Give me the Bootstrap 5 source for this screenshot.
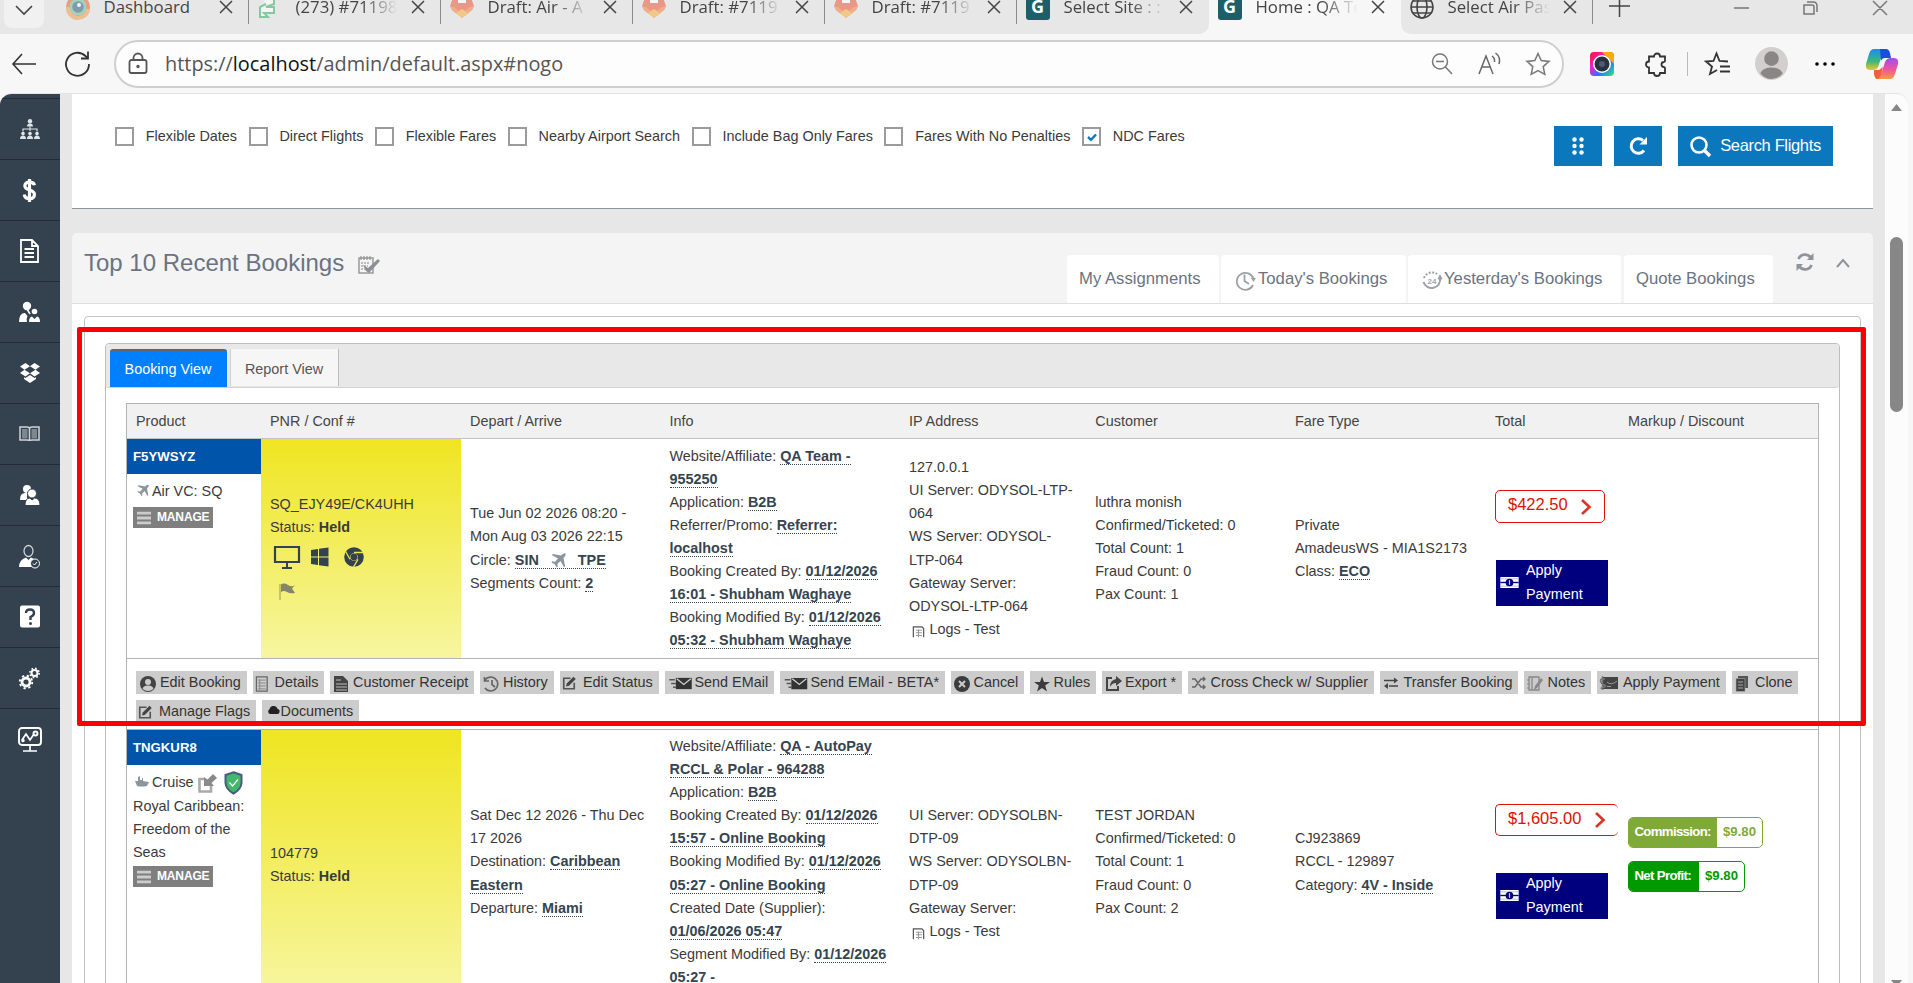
<!DOCTYPE html>
<html lang="en">
<head>
<meta charset="utf-8">
<title>Home : QA Team</title>
<link href="https://cdn.jsdelivr.net/npm/bootstrap@5.3.0/dist/css/bootstrap.min.css" rel="stylesheet">
<style>
html,body{height:983px;overflow:hidden}
body{font-family:"Liberation Sans",Arial,sans-serif;font-size:14.4px;line-height:23.06px;color:#3a3a3a;background:#f7f7f7}
svg{display:block;flex:none;overflow:visible}
.ln{fill:none}
.ln:not([stroke]){stroke:currentColor}
/* browser frame */
.tabstrip{height:34px;background:#e7e7e7;padding-left:4px;overflow:hidden;font-family:"Open Sans",sans-serif;font-size:16.8px;color:#444}
.tabmenu{width:40px;height:28px;background:#f1f1f1;border-radius:0 0 8px 8px;padding-bottom:8px;margin-right:12.5px}
.btab{width:192px;height:34px;padding:0 0 20px 9px;position:relative}
.btab .fav{width:25px;opacity:.55}
.btab .ttl{width:106px;margin:0 9px 0 13px;white-space:nowrap;overflow:hidden;-webkit-mask-image:linear-gradient(90deg,#000 62%,transparent 96%);mask-image:linear-gradient(90deg,#000 62%,transparent 96%)}
.btab .ttl.full{-webkit-mask-image:none;mask-image:none}
.btab.sep::after{content:"";position:absolute;right:0;top:0;width:1px;height:24px;background:#8a8a8a}
.btab.current{background:#f7f7f7}
.btab.current .fav,.btab .fav.solid{opacity:1}
.btab.beforecur{border-radius:0 0 10px 0;background:#e7e7e7}
.curwrap{background:#f7f7f7}
.btab.aftercur{border-radius:0 0 0 10px;background:#e7e7e7}
.gfav{width:24px;height:26px;background:#1c5f68;border-radius:3px;color:#fff;font-weight:700;font-size:18px;line-height:24px;text-align:center}
.toolbar{height:59px;color:#333}
.pill{height:48px;border:2px solid #cfcfcf;border-radius:24px;background:#fdfdfd;margin:0 9px 0 8px;color:#555}
.url{font-family:"Open Sans",sans-serif;font-size:19.9px;line-height:30px;color:#555;padding-left:5px}
.url b{font-weight:400;color:#111}
.w48{width:48px}.w52{width:52px}.w58{width:58px}
/* page */
.page{height:890px;border-top:1px solid #e3e3e3;overflow:hidden;margin-right:5px;border-top-right-radius:12px;background:#e7e7e7;border-top-left-radius:12px}
.side{width:60px;background:#34414e;color:#fff;padding-top:4px}
.side a{height:61px;border-top:1px solid #222c36;color:#fff;padding-right:1px}
.content{width:1825px;padding:0 12px;position:relative}
.scroller{width:23px;background:#fcfcfc;padding-top:10px;height:889px}
.thumb{width:13px;height:175px;border-radius:7px;background:#878787;margin:126px auto 0 5px}
.search-panel{height:115px;border-bottom:1px solid #8a979b;background:#fff;padding:33px 40px 0 43px}
.cb{width:19px;height:19px;border:2px solid #9b9b9b;background:#fff}
.opt{line-height:19px;margin-right:11.6px}
.opt .t{margin-left:11.8px}
.sbtn{height:40px;width:48px;background:#0b77bd;color:#fff;border:0;border-radius:0;padding:0;font-size:16.5px}
.sbtn.wide{width:155px;letter-spacing:-.35px}
.recent-head{height:71px;background:#f4f4f4;border-bottom:1px solid #dfdfdf;border-radius:5px 5px 0 0;margin-top:24px;padding-left:12px;color:#6b7380}
.recent-head h2{font-size:24px;font-weight:400;line-height:30px;margin:15px 14px 0 0}
.hm{height:48px;background:#fff;border-radius:4px 4px 0 0;font-size:16.7px;color:#6b7380;line-height:48px;white-space:nowrap}
.recent-body{background:#fff;padding:12px 12px 0;height:690px}
.outerbox{border:1px solid #c5c5c5;border-radius:4px;padding:26px 20px 0;height:700px}
.viewbox{border:1px solid #bdbdbd;border-radius:4px;height:700px}
.viewtabs{height:44px;background:#e8e8e8;border-bottom:1px solid #d3d3d3;border-radius:3px;padding:5px 0 0 4px}
.viewtabs a{text-decoration:none;font-size:14.4px;padding-right:1px}
.vt1{width:117px;height:38px;background:#007fff;color:#fff;border-top:2px solid #5b6670;border-radius:3px 3px 0 0;margin-right:3px;line-height:36px}
.vt2{width:109px;height:37px;background:#f6f6f6;color:#555;border-left:1px solid #cfcfcf;border-right:1px solid #bdbdbd;line-height:40px}
.grid{width:1693px;margin:15px 0 0 20px;border:1px solid #b3b3b3;height:700px}
.gr{display:grid;grid-template-columns:133.5px 200px 199.5px 239.5px 186.3px 199.7px 200px 133px 199.5px}
.gr>div{padding:5px 9.5px 5px;min-width:0}
.ghead{background:#f1f1f1;height:35px;border-bottom:1px solid #c3c3c3;color:#444}
.gr.ghead>div{padding-top:6px}
.gr.ghead>div:first-child{padding-left:9px}
.gr.grow1{height:220px;border-bottom:1px solid #b3b3b3}
.gr.grow2{height:264px}
.gr>.mid{display:flex;flex-direction:column;justify-content:center}
.gr>.prod{padding:0}
.prod .code{height:35px;background:#0055aa;color:#fff;font-weight:700;font-size:13.2px;line-height:35px;padding-left:6px}
.prod .in{padding:6px 0 0 6px}
.yel{background:linear-gradient(#efe521,#f7f6a0)}
.mng{width:80px;height:21px;background:#7f7f7f;color:#fff;font-weight:700;font-size:12px;line-height:21px;padding-left:4px}
.mng span{margin-left:6px;letter-spacing:-.15px}
.d{font-weight:700;color:#36444f;border-bottom:1px dotted #36444f;display:inline;text-decoration:none}
.inl{display:inline-block;vertical-align:middle}
.price{width:110px;height:33px;border:1px solid #dd1100;border-radius:5px;color:#dd1100;font-size:16.5px;line-height:31px;padding:0 12px;background:#fff}
.pay{width:112px;height:46px;background:#00007f;color:#fff;padding-left:4px}
.pay span{width:70px;margin-left:7px}
.money{height:31px;border:1px solid;border-radius:5px;font-weight:700;font-size:13.2px;overflow:hidden;background:#fff;line-height:27px}
.money>span{padding:0 5px 0 5.5px;letter-spacing:-.65px;color:#fff;display:block;height:31px}
.money>b{padding-left:6px}
.cm{width:135px;border-color:#80aa37!important;color:#80aa37}.cm>span{background:#80aa37;width:88px}
.np{width:117px;border-color:#009a00!important;color:#009a00}.np>span{background:#009a00;width:70px}
.acts{height:71px;border-bottom:1px solid #b3b3b3;padding:12px 0 0 9px;display:flex;flex-wrap:wrap;column-gap:6px;row-gap:6px;align-content:flex-start}
.acts a{height:23px;background:#ccc;color:#333;text-decoration:none;display:flex;align-items:center;white-space:nowrap;line-height:23px}
.acts svg{margin-top:2px}
.a1{width:111px}.a2{width:71px}.a3{width:144px}.a4{width:74px}.a5{width:99px}.a6{width:109px}.a7{width:165px}.a8{width:73px}.a9{width:66px}.a10{width:80px}.a11{width:186px}.a12{width:138px}.a13{width:67px}.a14{width:129px}.a15{width:66px}.a16{width:120px}.a17{width:97px}
.redbox{position:absolute;left:17px;top:233px;width:1789px;height:399px;border:5px solid #f00;border-radius:2px;z-index:3}
</style>
</head>
<body>
<svg width="0" height="0" class="position-absolute">
<defs>
<symbol id="x" viewBox="0 0 14 14"><path d="M1 1L13 13M13 1L1 13" fill="none" stroke="#444" stroke-width="1.5"/></symbol>
<symbol id="fox" viewBox="0 0 24 24"><path d="M4 0H20L24 11L22 15L12 23L2 15L0 11Z" fill="#f0563a"/><path d="M0 11L2 15L7 19L9 16L4 12ZM24 11L22 15L17 19L15 16L20 12Z" fill="#fc7d3a"/><path d="M6 18L12 14L18 18L12 23Z" fill="#fcb03a"/><path d="M8 0H16V8H8Z" fill="#fff"/></symbol>
<symbol id="plane" viewBox="0 0 16 16"><path d="M15.500 .5C14 -.2 12.500 1 10.800 2.700L2 1L.8 2.200L7.500 5.800L4.300 9.200L1.500 8.900L.5 10L4 12L6 15.500L7.100 14.500L6.800 11.700L10.200 8.500L13.800 15.200L15 14L13.300 5.200C15 3.500 16.200 2 15.500 .5Z" fill="#8d959c"/></symbol>
<symbol id="note" viewBox="0 0 20 20"><path d="M17 9v8H3V3h9" fill="none" stroke="#555" stroke-width="2.200"/><path d="M6 14L7 10L16 1L19 4L10 13Z" fill="#444"/></symbol>
<symbol id="mail" viewBox="0 0 26 16"><path d="M8 2H25V14H8Z" fill="#333"/><path d="M9 3L16.500 9L24 3" fill="none" stroke="#ccc" stroke-width="1.500"/><path d="M1 4H7M3 8H8M5 12H8" stroke="#555" stroke-width="1.500"/></symbol>
<symbol id="bars" viewBox="0 0 16 16"><path d="M0 2.500H16M0 8H16M0 13.500H16" stroke="#ccc" stroke-width="3.200"/></symbol>
<symbol id="cash" viewBox="0 0 20 12"><path d="M0 0H20V12H0Z" fill="#fff"/><path d="M0 2H20M0 10H20" stroke="#99c" stroke-width=".7"/><path d="M0 6H20" stroke="#00007f" stroke-width="1.500"/><circle cx="10" cy="6" r="4.200" fill="#00007f"/><path d="M10 3.500V8.500" stroke="#ccf" stroke-width="1.300"/></symbol>
<symbol id="logs" viewBox="0 0 14 14"><path d="M1 13V1H11L13 3V13" fill="none" stroke="#555" stroke-width="1.400"/><path d="M4 5H11M4 8H11M4 11H11M7 4V13" stroke="#999" stroke-width="1.200"/></symbol>
<symbol id="dollar" viewBox="0 0 16 28"><path d="M13.500 8C13 5 10.500 4.500 8 4.500C4.500 4.500 2.800 6.300 2.800 8.800C2.800 15 13.500 12 13.500 18.500C13.500 21.500 11.500 23.200 8 23.200C4.500 23.200 2.500 21.500 2.200 18.500M8 1V27" fill="none" stroke="#fff" stroke-width="3.600"/></symbol>
</defs>
</svg>

<div class="tabstrip d-flex">
  <div class="tabmenu d-flex align-items-center justify-content-center"><svg width="18" height="10" viewBox="0 0 18 10" class="ln" stroke-width="1.6"><path d="M1 1L9 9L17 1"/></svg></div>
  <div class="btab sep d-flex align-items-center"><div class="fav"><svg width="24" height="24" viewBox="0 0 24 24"><circle cx="12" cy="12" r="10" fill="#fff" stroke="#e8652e" stroke-width="4"/><path d="M2 12A10 10 0 0 0 22 14" fill="none" stroke="#f0a04a" stroke-width="4"/><circle cx="12" cy="12" r="7" fill="#2d5f7c" stroke="#5cc4a0" stroke-width="2.500"/><circle cx="13" cy="10" r="2" fill="#fff"/></svg></div><span class="ttl full">Dashboard</span><svg width="14" height="14"><use href="#x"/></svg></div>
  <div class="btab sep d-flex align-items-center"><div class="fav"><svg width="20" height="26" viewBox="0 0 20 26"><path d="M3 2V-2H16V10L8 13H16V19H6L10 23L2 23V13L8 10" fill="#fff" stroke="#2cb56a" stroke-width="2"/></svg></div><span class="ttl">(273) #71198</span><svg width="14" height="14"><use href="#x"/></svg></div>
  <div class="btab sep d-flex align-items-center"><div class="fav"><svg width="24" height="24"><use href="#fox"/></svg></div><span class="ttl">Draft: Air - A</span><svg width="14" height="14"><use href="#x"/></svg></div>
  <div class="btab sep d-flex align-items-center"><div class="fav"><svg width="24" height="24"><use href="#fox"/></svg></div><span class="ttl">Draft: #7119</span><svg width="14" height="14"><use href="#x"/></svg></div>
  <div class="btab sep d-flex align-items-center"><div class="fav"><svg width="24" height="24"><use href="#fox"/></svg></div><span class="ttl">Draft: #7119</span><svg width="14" height="14"><use href="#x"/></svg></div>
  <div class="d-flex curwrap">
  <div class="btab beforecur d-flex align-items-center"><div class="fav solid"><div class="gfav">G</div></div><span class="ttl">Select Site : :</span><svg width="14" height="14"><use href="#x"/></svg></div>
  <div class="btab current d-flex align-items-center"><div class="fav"><div class="gfav">G</div></div><span class="ttl">Home : QA Te</span><svg width="14" height="14"><use href="#x"/></svg></div>
  <div class="btab sep aftercur d-flex align-items-center"><div class="fav solid"><svg width="24" height="24" viewBox="0 0 24 24" class="ln" stroke-width="1.600"><circle cx="12" cy="12" r="11"/><ellipse cx="12" cy="12" rx="5" ry="11"/><path d="M1 12H23M3 6H21M3 18H21"/></svg></div><span class="ttl">Select Air Pas</span><svg width="14" height="14"><use href="#x"/></svg></div>
  </div>
  <svg width="320" height="34" viewBox="0 0 320 34" class="ln" stroke-width="1.500"><path d="M16 6H37M26.500 -4V17"/><g stroke="#777"><path d="M141 8H156M211 5H219Q221 5 221 7V14H211ZM214 2H220Q224 2 224 6V12M280 1L294 15M294 1L280 15"/></g></svg>
</div>

<div class="toolbar d-flex align-items-center">
  <div class="w48 d-flex justify-content-center"><svg width="24" height="20" viewBox="0 0 24 20" class="ln" stroke-width="1.600"><path d="M24 10H1M10 0L1 10L10 20"/></svg></div>
  <div class="w58 d-flex justify-content-center"><svg width="26" height="26" viewBox="0 0 26 26" class="ln" stroke-width="1.800"><path d="M25 13A11.500 11.500 0 1 1 21.500 5L24 7M24 .5V7.500H17"/></svg></div>
  <div class="pill flex-fill d-flex align-items-center">
    <svg width="44" height="22" viewBox="0 0 44 22" class="ln" stroke-width="1.800"><rect x="13.500" y="7" width="17" height="13" rx="2"/><path d="M17.500 7V5A4.500 4.500 0 0 1 26.500 5V7"/><circle cx="22" cy="13.500" r=".8"/></svg>
    <span class="url flex-fill">https://<b>localhost</b>/admin/default.aspx#nogo</span>
    <div class="w48 d-flex justify-content-center"><svg width="22" height="22" viewBox="0 0 22 22" class="ln" stroke="#777" stroke-width="1.500"><circle cx="9" cy="8.500" r="7.500"/><path d="M5 8.500H13M14.500 14L21 21"/></svg></div>
    <div class="w48 d-flex justify-content-center"><svg width="24" height="22" viewBox="0 0 24 22" class="ln" stroke="#666" stroke-width="1.500"><path d="M1 21L8 3L15 21M4 14H12M14 3Q17 5 16.500 9M17.500 0Q23 4 21 11"/></svg></div>
    <div class="w48 d-flex justify-content-center"><svg width="24" height="24" viewBox="0 0 24 24" class="ln" stroke="#777" stroke-width="1.500"><path d="M12 1.500L15.200 8.500L23 9.400L17.200 14.600L18.800 22.300L12 18.500L5.200 22.300L6.800 14.600L1 9.400L8.800 8.500Z"/></svg></div>
  </div>
  <div class="w58 d-flex justify-content-center"><svg width="24" height="24" viewBox="0 0 24 24"><defs><linearGradient id="cam" x2="1" y2="1"><stop stop-color="#f12"/><stop offset=".35" stop-color="#e2c"/><stop offset=".65" stop-color="#27f"/><stop offset="1" stop-color="#3e6"/></linearGradient></defs><rect width="24" height="24" rx="4" fill="url(#cam)"/><path d="M12 0H20Q24 0 24 4V12Z" fill="#fa0"/><circle cx="12" cy="12" r="9" fill="#fff"/><circle cx="12" cy="12" r="7.500" fill="#26323c"/><circle cx="12" cy="12" r="3" fill="#557"/></svg></div>
  <div class="w52 d-flex justify-content-center"><svg width="24" height="24" viewBox="0 0 24 24" class="ln" stroke-width="1.800"><path d="M4 4.500H9A3 3 0 0 1 15 4.500H20V9A1.500 1.500 0 0 1 19 10A2.500 2.500 0 0 0 19 15A1.500 1.500 0 0 1 20 16V21H15A3 3 0 0 1 9 21H4V15.500A3 3 0 0 1 4 9.500Z"/></svg></div>
  <div style="width:8px" class="d-flex justify-content-center"><svg width="1" height="24"><rect width="1" height="24" fill="#bbb"/></svg></div>
  <div class="w52 d-flex justify-content-center"><svg width="25" height="24" viewBox="0 0 25 24" class="ln" stroke-width="1.800"><path d="M12 18L5 22L7 14.500L1 9.500L8.500 9L11.500 1.500L14.500 9L23 9.500M15 14.500H25M15 19.500H25"/></svg></div>
  <div style="width:56px" class="d-flex justify-content-center"><svg width="33" height="33" viewBox="0 0 34 34"><circle cx="17" cy="17" r="17" fill="#d2d0ce"/><circle cx="17" cy="12" r="7.500" fill="#8a8684"/><path d="M5.500 27Q8 21 17 21T28.500 27Q24 33 17 33T5.500 27Z" fill="#8a8684"/></svg></div>
  <div class="w52 d-flex justify-content-center"><svg width="20" height="4" viewBox="0 0 20 4"><circle cx="2" cy="2" r="1.800"/><circle cx="10" cy="2" r="1.800"/><circle cx="18" cy="2" r="1.800"/></svg></div>
  <div style="width:62px" class="d-flex justify-content-center"><svg width="34" height="30" viewBox="0 0 34 30"><defs><linearGradient id="c1" x2="0" y2="1"><stop stop-color="#1a8df0"/><stop offset=".6" stop-color="#3cb878"/><stop offset="1" stop-color="#f5c42c"/></linearGradient><linearGradient id="c2" x2="0" y2="1"><stop stop-color="#a24cf0"/><stop offset=".55" stop-color="#f0559b"/><stop offset="1" stop-color="#fb9a3c"/></linearGradient></defs><path d="M9 0H20Q18 2 17 6L13.500 17Q12 21 8 21H5Q0 21 1 15L4 5Q5.500 0 9 0Z" fill="url(#c1)"/><path d="M15 0H21Q24 0 25 4L26 9H20Q17 9 16 12Z" fill="#1b4fd8"/><path d="M25 30H12Q15 28 16.500 24L20 13Q21.500 9 26 9H29Q34 9 33 15L30 25Q28.500 30 25 30Z" fill="url(#c2)"/><path d="M9 21H14L18 18L16 26Q14 30 12 30Q10 30 9 25Z" fill="#f0603c"/></svg></div>
</div>

<div class="page d-flex">
  <nav class="side d-flex flex-column">
    <a class="d-flex align-items-center justify-content-center"><svg width="20" height="20" viewBox="0 0 20 20" fill="#dfe4e8"><circle cx="10" cy="2.300" r="2.200"/><path d="M7 7.500Q7 4.600 10 4.600T13 7.500ZM0 20Q0 16.500 3 16.500T6 20ZM7 20Q7 16.500 10 16.500T13 20ZM14 20Q14 16.500 17 16.500T20 20Z"/><circle cx="3" cy="14.600" r="1.800"/><circle cx="10" cy="14.600" r="1.800"/><circle cx="17" cy="14.600" r="1.800"/><path d="M3 12.500V10H17V12.500M10 7.500V12" fill="none" stroke="#dfe4e8" stroke-width="1.200"/></svg></a>
    <a class="d-flex align-items-center justify-content-center"><svg width="15" height="25"><use href="#dollar"/></svg></a>
    <a class="d-flex align-items-center justify-content-center"><svg width="19" height="24" viewBox="0 0 19 24" class="ln" stroke-width="1.800"><path d="M1 1H12L18 7V23H1ZM12 1V7H18M4.500 10H14M4.500 14H14M4.500 18H14"/></svg></a>
    <a class="d-flex align-items-center justify-content-center"><svg width="21" height="21" viewBox="0 0 21 21" fill="#fff"><circle cx="8" cy="4" r="4.200"/><path d="M0 20Q0 11 6 11L8.500 14Q7 17 8 20Z"/><circle cx="15.500" cy="9.500" r="2.800"/><path d="M10 20Q10 15 13 14.500L15.500 17L18 14.500Q21 15 21 20Z"/><path d="M8 7L11 12" stroke="#fff" stroke-width="1.500"/></svg></a>
    <a class="d-flex align-items-center justify-content-center"><svg width="20" height="20" viewBox="0 0 20 20" fill="#fff"><path d="M5.500 0L10 3.200L4.500 6.700L0 3.500ZM14.500 0L20 3.500L15.500 6.700L10 3.200ZM0 10L4.500 6.700L10 10.300L5.500 13.500ZM20 10L15.500 6.700L10 10.300L14.500 13.500ZM4 14.200L5.500 15L10 12L14.500 15L16 14.200V16L10 20L4 16Z"/></svg></a>
    <a class="d-flex align-items-center justify-content-center"><svg width="21" height="16" viewBox="0 0 21 16" class="ln" stroke="#cfd4d8" stroke-width="1.500"><path d="M1 1H8Q10.500 1 10.500 3Q10.500 1 13 1H20V14H13Q10.500 14 10.500 15Q10.500 14 8 14H1ZM10.500 3V14"/><path d="M4.500 4.500H7V11H4.500ZM14 4.500H16.500V11H14Z" stroke="#7d8791" stroke-width="3"/></svg></a>
    <a class="d-flex align-items-center justify-content-center"><svg width="20" height="21" viewBox="0 0 20 21" fill="#fff"><circle cx="7" cy="4" r="4"/><path d="M0 15Q0 8 5 8H8Q6 12 8 15Z"/><g stroke="#34414e"><circle cx="12" cy="8.500" r="4.500"/><path d="M5 20.500Q5 13 10 13L12 15L14.500 13Q20 13 20 20.500Z"/></g></svg></a>
    <a class="d-flex align-items-center justify-content-center"><svg width="21" height="23" viewBox="0 0 21 23"><ellipse cx="9.500" cy="6" rx="4.500" ry="5.500" fill="none" stroke="#cfd4d8" stroke-width="1.300"/><path d="M0 22Q0 15 7 12.500L9.500 15L12 12.500L17 15V22Z" fill="#fff"/><circle cx="16" cy="18.500" r="4.500" fill="#34414e" stroke="#fff"/><path d="M14 18.500L15.500 20L18 17" class="ln" stroke="#fff"/></svg></a>
    <a class="d-flex align-items-center justify-content-center"><svg width="20" height="22" viewBox="0 0 20 22"><rect y="-.5" width="20" height="22" rx="2" fill="#fff"/><path d="M6 7Q6 3.500 10 3.500T14 7Q14 9.500 10.500 11V14" fill="none" stroke="#34414e" stroke-width="2.400"/><circle cx="10.500" cy="17.500" r="1.500" fill="#34414e"/></svg></a>
    <a class="d-flex align-items-center justify-content-center"><svg width="21" height="21" viewBox="0 0 21 21" class="ln" stroke="#fff"><circle cx="7" cy="14" r="4" stroke-width="2.800"/><circle cx="7" cy="14" r="6.300" stroke-width="1.800" stroke-dasharray="2.300 2.650"/><circle cx="15.500" cy="5" r="3" stroke-width="2"/><circle cx="15.500" cy="5" r="4.700" stroke-width="1.500" stroke-dasharray="1.700 1.990"/></svg></a>
    <a class="d-flex align-items-center justify-content-center"><svg width="24" height="25" viewBox="0 0 24 25" class="ln" stroke="#fff" stroke-width="1.900"><rect x="1" y="1" width="22" height="17" rx="3"/><path d="M12 18V23.500M5 24H19M4 13L8 7L12 13L16 7" stroke-width="1.700"/><circle cx="17.500" cy="6.500" r="2"/><circle cx="5" cy="13.500" r=".8"/></svg></a>
  </nav>

  <main class="content">
    <section class="search-panel d-flex align-items-start">
      <div class="d-flex flex-fill opts">
        <label class="opt d-flex"><span class="cb"></span><span class="t">Flexible Dates</span></label>
        <label class="opt d-flex"><span class="cb"></span><span class="t">Direct Flights</span></label>
        <label class="opt d-flex"><span class="cb"></span><span class="t">Flexible Fares</span></label>
        <label class="opt d-flex"><span class="cb"></span><span class="t">Nearby Airport Search</span></label>
        <label class="opt d-flex"><span class="cb"></span><span class="t">Include Bag Only Fares</span></label>
        <label class="opt d-flex"><span class="cb"></span><span class="t">Fares With No Penalties</span></label>
        <label class="opt d-flex"><span class="cb"><svg width="15" height="15" viewBox="0 0 15 15" class="ln" stroke="#0b77bd" stroke-width="2.400"><path d="M4 8L7 10.800L12 5.500"/></svg></span><span class="t">NDC Fares</span></label>
      </div>
      <div class="d-flex" style="margin-top:-1px">
        <button class="sbtn d-flex align-items-center justify-content-center me-2"><svg width="12" height="18" viewBox="0 0 12 18" fill="#fff"><circle cx="2.500" cy="2.500" r="2.200"/><circle cx="9.500" cy="2.500" r="2.200"/><circle cx="2.500" cy="9" r="2.200"/><circle cx="9.500" cy="9" r="2.200"/><circle cx="2.500" cy="15.500" r="2.200"/><circle cx="9.500" cy="15.500" r="2.200"/></svg></button>
        <button class="sbtn d-flex align-items-center justify-content-center ms-1 me-3"><svg width="18" height="18" viewBox="0 0 18 18"><path d="M15 13.500A7.200 7.200 0 1 1 14 3.500" fill="none" stroke="#fff" stroke-width="3"/><path d="M18 0V7.500H10.500Z" fill="#fff"/></svg></button>
        <button class="sbtn wide d-flex align-items-center justify-content-center"><svg width="21" height="21" viewBox="0 0 21 21" fill="none" stroke="#fff"><circle cx="9" cy="9" r="7.500" stroke-width="2.600"/><path d="M14.500 14.500L20 20" stroke-width="3.400"/></svg><span style="margin-left:9px">Search Flights</span></button>
      </div>
    </section>

    <section>
      <header class="recent-head d-flex align-items-start">
        <h2>Top 10 Recent Bookings</h2>
        <svg width="22" height="18" viewBox="0 0 22 18" style="margin-top:23px"><path d="M1 2H15V17H1Z" fill="none" stroke="#999" stroke-width="1.500"/><path d="M3 0V4M6 0V4M9 0V4M12 0V4" stroke="#888"/><path d="M3 7H12M3 10H10M3 13H9" stroke="#aaa" stroke-width="1.500" stroke-dasharray="2 1"/><path d="M5 9L10 12L20 3L22 5L11 17L8 15Z" fill="#8a9096"/></svg>
        <div class="d-flex ms-auto" style="margin-top:22px">
          <span class="hm" style="width:152px;margin-right:2px;padding-left:12px">My Assignments</span>
          <span class="hm d-flex align-items-center" style="width:185px;margin-right:2px;padding-left:14px"><svg width="21" height="20" viewBox="0 0 21 20" class="ln" stroke="#9ba1a7" stroke-width="1.800" style="margin-right:2px;margin-top:3px"><path d="M18 14A8.500 8.500 0 1 1 18.500 8M9.500 3.500V10L14 13"/><path d="M16 7H21L18.500 11Z" fill="#9ba1a7" stroke="none"/></svg>Today's Bookings</span>
          <span class="hm d-flex align-items-center" style="width:213px;margin-right:3px;padding-left:14px"><svg width="20" height="20" viewBox="0 0 20 20" class="ln" stroke="#9ba1a7" stroke-width="2" style="margin-right:2px;margin-top:3px"><path d="M18 7A8.500 8.500 0 0 1 1.500 11"/><path d="M2 7A8.500 8.500 0 0 1 15 3" stroke-dasharray="2 1.500"/><path d="M16 8L18 4L20 8Z" fill="#9ba1a7" stroke-width="1"/><text x="10" y="13" text-anchor="middle" font-size="8" font-weight="700" fill="#a0a5aa" stroke="none">24</text></svg>Yesterday's Bookings</span>
          <span class="hm" style="width:149px;padding-left:12px">Quote Bookings</span>
        </div>
        <svg width="100" height="40" viewBox="0 0 100 40" style="margin-top:10px"><g class="ln" stroke="#8d949b" stroke-width="2.800"><path d="M25.500 16A7 7 0 0 1 38 15M38.500 22A7 7 0 0 1 26 23"/></g><path d="M40.500 10V17H34ZM23.500 28V21H30Z" fill="#8d949b"/><path d="M64 24L70 17L76 24" class="ln" stroke="#8d949b" stroke-width="2"/></svg>
      </header>

      <div class="recent-body"><div class="outerbox"><div class="viewbox">
        <div class="viewtabs d-flex"><a class="vt1 text-center">Booking View</a><a class="vt2 text-center">Report View</a></div>
        <div class="grid">
          <div class="gr ghead"><div>Product</div><div>PNR / Conf #</div><div>Depart / Arrive</div><div>Info</div><div>IP Address</div><div>Customer</div><div>Fare Type</div><div>Total</div><div>Markup / Discount</div></div>

          <div class="gr grow1">
            <div class="prod"><div class="code">F5YWSYZ</div><div class="in"><div class="d-flex align-items-center" style="padding-left:4px"><svg width="12" height="13" style="margin-right:3px;margin-top:-2px"><use href="#plane"/></svg>Air VC: SQ</div><div class="mng d-flex align-items-center mt-1"><svg width="14" height="14"><use href="#bars"/></svg><span>MANAGE</span></div></div></div>
            <div class="yel" style="padding-top:54px"><div>SQ_EJY49E/CK4UHH</div><div>Status: <b>Held</b></div>
              <svg width="100" height="66" viewBox="0 0 100 66"><g fill="#34414e"><path d="M5 8H29V23H5Z" fill="none" stroke="#34414e" stroke-width="2.200"/><path d="M16 23H18V28H16ZM12 28H22V30H12ZM41 11L48 10V17.500H41ZM49 9.800L58.500 8.500V17.500H49ZM41 18.500H48V26L41 25ZM49 18.500H58.500V27.500L49 26.200Z"/></g><circle cx="84" cy="18" r="6.800" fill="none" stroke="#34414e" stroke-width="6"/><circle cx="84" cy="18" r="3.400" fill="#34414e"/><path d="M84 13.500H93.500M80 20.300L75 11.500M88 20.300L83.500 28" stroke="#eee74a" stroke-width="1.300"/><path d="M10 45V61" stroke="#a9a55a" stroke-width="1.200"/><path d="M11 45.500Q14 43.500 18 46T25 46L22 49.500L25 54Q20 55 17 53T11 53Z" fill="#85856a"/></svg></div>
            <div class="mid"><div>Tue Jun 02 2026 08:20 -<br>Mon Aug 03 2026 22:15</div><div>Circle: <span class="d">SIN &nbsp;<svg width="15" height="15" class="inl mx-1"><use href="#plane"/></svg> &nbsp;TPE</span></div><div>Segments Count: <span class="d">2</span></div></div>
            <div class="mid text-nowrap"><div>Website/Affiliate: <span class="d">QA Team -<br>955250</span></div><div>Application: <span class="d">B2B</span></div><div>Referrer/Promo: <span class="d">Referrer:<br>localhost</span></div><div>Booking Created By: <span class="d">01/12/2026<br>16:01 - Shubham Waghaye</span></div><div>Booking Modified By: <span class="d">01/12/2026<br>05:32 - Shubham Waghaye</span></div></div>
            <div class="mid text-nowrap"><div>127.0.0.1</div><div>UI Server: ODYSOL-LTP-<br>064</div><div>WS Server: ODYSOL-<br>LTP-064</div><div>Gateway Server:<br>ODYSOL-LTP-064</div><div class="d-flex align-items-center"><svg width="13" height="12" style="margin:5px 5px 0 2.500px"><use href="#logs"/></svg>Logs - Test</div></div>
            <div class="mid"><div>luthra monish</div><div>Confirmed/Ticketed: 0</div><div>Total Count: 1</div><div>Fraud Count: 0</div><div>Pax Count: 1</div></div>
            <div class="mid text-nowrap"><div>Private</div><div>AmadeusWS - MIA1S2173</div><div>Class: <span class="d">ECO</span></div></div>
            <div class="mid" style="padding-bottom:7px"><div class="price d-flex justify-content-between align-items-center"><span style="margin-top:-3px">$422.50</span><svg width="11" height="16" viewBox="0 0 11 16" class="ln" stroke="#dd3322" stroke-width="2.600" style="margin-top:2px"><path d="M1 1L8.500 8L1 15"/></svg></div><div class="pay d-flex align-items-center" style="margin:37px 0 0 1px"><svg width="19" height="11"><use href="#cash"/></svg><span>Apply Payment</span></div></div>
            <div></div>
          </div>

          <div class="acts">
            <a class="a1"><svg width="24" height="16" viewBox="0 0 24 16"><circle cx="12" cy="8" r="8" fill="#444"/><circle cx="12" cy="6" r="3" fill="#ccc"/><path d="M6.500 13Q7 9.500 12 9.500T17.500 13Q15 15 12 15T6.500 13Z" fill="#ccc"/></svg>Edit Booking</a>
            <a class="a2"><svg width="21.500" height="16" viewBox="0 0 22 16"><path d="M3.500 .7H14.500V15.300H3.500Z" fill="none" stroke="#666" stroke-width="1.300"/><path d="M5 4H13M5 7H13M5 10H13M5 13H13M7 3V14" stroke="#888"/></svg>Details</a>
            <a class="a3"><svg width="23" height="16" viewBox="0 0 23 16"><path d="M4 0H13L18 5V16H4Z" fill="#444"/><path d="M6 8H17M6 11H17M6 14H17M6 4H11" stroke="#bbb"/></svg>Customer Receipt</a>
            <a class="a4"><svg width="23" height="16" viewBox="0 0 23 16" class="ln" stroke="#666" stroke-width="1.700"><path d="M5 4A7 7 0 1 1 5 12M12 4V8.500L15 11M4.500 1V5H9"/></svg>History</a>
            <a class="a5"><svg width="23" height="15" viewBox="-2 0 30.670 20"><use href="#note" width="20" height="20"/></svg>Edit Status</a>
            <a class="a6"><svg width="29.500" height="16" viewBox="-3 0 29.500 16"><use href="#mail" width="25" height="15"/></svg>Send EMail</a>
            <a class="a7"><svg width="30.500" height="16" viewBox="-3.500 0 30.500 16"><use href="#mail" width="25" height="15"/></svg>Send EMail - BETA*</a>
            <a class="a8"><svg width="22.500" height="16" viewBox="0 0 22.500 16"><circle cx="11" cy="8" r="8" fill="#3c3c3c"/><path d="M8 5L14 11M14 5L8 11" stroke="#ccc" stroke-width="2"/></svg>Cancel</a>
            <a class="a9"><svg width="23.500" height="16" viewBox="0 0 23.500 16"><path d="M12 .5L14 6H20L15.200 9.600L17 15.500L12 12L7 15.500L8.800 9.600L4 6H10Z" fill="#3c3c3c"/></svg>Rules</a>
            <a class="a10"><svg width="23" height="16" viewBox="0 0 23 16"><path d="M10 2H5V14H16V10" fill="none" stroke="#444" stroke-width="2"/><path d="M14 0L20 5L14 10V7Q10 7 8 11Q8 4 14 3Z" fill="#444"/></svg>Export *</a>
            <a class="a11"><svg width="22.500" height="14" viewBox="0 0 22.500 14" class="ln" stroke="#666" stroke-width="1.400"><path d="M4 2H7L13 10H17M4 10H7L13 2H17M15 0L17 2L15 4M15 8L17 10L15 12"/></svg>Cross Check w/ Supplier</a>
            <a class="a12"><svg width="23.500" height="14" viewBox="0 0 23.500 14"><path d="M4 3.500H14M9 9H18" stroke="#444" stroke-width="1.700"/><path d="M14 .5L18 3.500L14 6.500ZM8 6L4 9L8 12Z" fill="#444"/></svg>Transfer Booking</a>
            <a class="a13"><svg width="23.500" height="16" viewBox="0 0 23.500 16"><path d="M5 1H15V14H5ZM8 1V14" fill="none" stroke="#888" stroke-width="1.300"/><path d="M3 4H6M3 8H6M3 12H6" stroke="#888"/><path d="M10 14L11 10L17 2L19 4L13 12Z" fill="#888"/></svg>Notes</a>
            <a class="a14"><svg width="26" height="14" viewBox="0 0 26 14"><path d="M5 0H21V12H5Z" fill="#444"/><path d="M10 5Q14 9 20 4M10 9.500H14" class="ln" stroke="#999"/><path d="M8 2Q3 1 3.500 4T7.500 8T3.500 11.500M5.500 -1V13" class="ln" stroke="#777" stroke-width="1.500"/></svg>Apply Payment</a>
            <a class="a15"><svg width="23" height="16" viewBox="0 0 23 16"><path d="M6 0H16V12H6Z" fill="#555"/><path d="M4 2.500H13V15.500H4Z" fill="#444" stroke="#aaa" stroke-width=".6"/><path d="M6 6H11M6 9H11M6 12H11" stroke="#aaa"/></svg>Clone</a>
            <a class="a16"><svg width="23" height="15" viewBox="-2 0 30.670 20"><use href="#note" width="20" height="20"/></svg>Manage Flags</a>
            <a class="a17"><svg width="18.500" height="10" viewBox="0 0 19 10" style="margin-top:-3px"><path d="M8 9A2.500 2.500 0 0 1 7.500 4.500Q9 0 12 1Q15 1 16 4Q18.500 4.500 18 7Q18 9 16 9Z" fill="#222"/></svg>Documents</a>
          </div>

          <div class="gr grow2">
            <div class="prod"><div class="code">TNGKUR8</div><div class="in"><div class="d-flex align-items-center"><svg width="14" height="11" viewBox="0 0 14 11" style="margin:-3px 3px 0 2px"><path d="M0 5H3V1L5 0V4H7V2H8V5L14 6L12 10Q6 11 2 10Z" fill="#8d969e"/></svg><span>Cruise</span><svg width="19" height="19" viewBox="0 0 19 19" style="margin:0 7px 0 4px"><path d="M6 5H1.500V17.500H13V12" fill="none" stroke="#aaa" stroke-width="2.600"/><path d="M15 0L19 4L13.500 9L16 12H6V3L9.500 5.500Z" fill="#8a8a8a"/></svg><svg width="19" height="24" viewBox="0 0 19 24" class="my-n1"><path d="M9.500 1.200L17.500 4V12Q17 18.500 9.500 22.500Q2 18.500 1.500 12V4Z" fill="#42b96a" stroke="#4a5a80" stroke-width="2"/><path d="M5.500 11.500L8.500 15L14 8.500" class="ln" stroke="#fff" stroke-width="1.200"/></svg></div><div>Royal Caribbean:<br>Freedom of the<br>Seas</div><div class="mng d-flex align-items-center" style="margin-top:2px"><svg width="14" height="14"><use href="#bars"/></svg><span>MANAGE</span></div></div></div>
            <div class="yel mid" style="padding-top:11px"><div>104779</div><div>Status: <b>Held</b></div></div>
            <div class="mid text-nowrap"><div>Sat Dec 12 2026 - Thu Dec<br>17 2026</div><div>Destination: <span class="d">Caribbean<br>Eastern</span></div><div>Departure: <span class="d">Miami</span></div></div>
            <div class="mid text-nowrap"><div>Website/Affiliate: <span class="d">QA - AutoPay<br>RCCL &amp; Polar - 964288</span></div><div>Application: <span class="d">B2B</span></div><div>Booking Created By: <span class="d">01/12/2026<br>15:57 - Online Booking</span></div><div>Booking Modified By: <span class="d">01/12/2026<br>05:27 - Online Booking</span></div><div>Created Date (Supplier):<br><span class="d">01/06/2026 05:47</span></div><div>Segment Modified By: <span class="d">01/12/2026<br>05:27 -</span></div></div>
            <div class="mid text-nowrap"><div>&nbsp;</div><div>UI Server: ODYSOLBN-<br>DTP-09</div><div>WS Server: ODYSOLBN-<br>DTP-09</div><div>Gateway Server:</div><div class="d-flex align-items-center"><svg width="13" height="12" style="margin:5px 5px 0 2.500px"><use href="#logs"/></svg>Logs - Test</div></div>
            <div class="mid"><div>TEST JORDAN</div><div>Confirmed/Ticketed: 0</div><div>Total Count: 1</div><div>Fraud Count: 0</div><div>Pax Count: 2</div></div>
            <div class="mid"><div>CJ923869</div><div>RCCL - 129897</div><div>Category: <span class="d">4V - Inside</span></div></div>
            <div class="mid pe-0" style="padding-bottom:7px"><div class="price d-flex justify-content-between align-items-center border-end-0" style="width:123px;height:32px"><span style="margin-top:-2px">$1,605.00</span><svg width="11" height="16" viewBox="0 0 11 16" class="ln" stroke="#dd3322" stroke-width="2.600"><path d="M1 1L8.500 8L1 15"/></svg></div><div class="pay d-flex align-items-center" style="margin:37px 0 0 1px"><svg width="19" height="11"><use href="#cash"/></svg><span>Apply Payment</span></div></div>
            <div class="mid"><div class="money cm d-flex" style="margin-top:-15px"><span>Commission:</span><b>$9.80</b></div><div class="money np d-flex" style="margin-top:13px"><span>Net Profit:</span><b>$9.80</b></div></div>
          </div>
        </div>
      </div></div></div>
    </section>
    <div class="redbox"></div>
  </main>

  <div class="scroller d-flex flex-column">
    <svg width="11" height="7" viewBox="0 0 11 7" style="margin-left:6px"><path d="M0 7L5.500 0L11 7Z" fill="#878787"/></svg>
    <div class="thumb"></div>
    <svg width="11" height="7" viewBox="0 0 11 7" class="mt-auto" style="margin-left:6px;margin-bottom:-4px"><path d="M0 0L5.500 7L11 0Z" fill="#878787"/></svg>
  </div>
</div>
<script src="https://cdn.jsdelivr.net/npm/bootstrap@5.3.0/dist/js/bootstrap.bundle.min.js"></script>
</body>
</html>
